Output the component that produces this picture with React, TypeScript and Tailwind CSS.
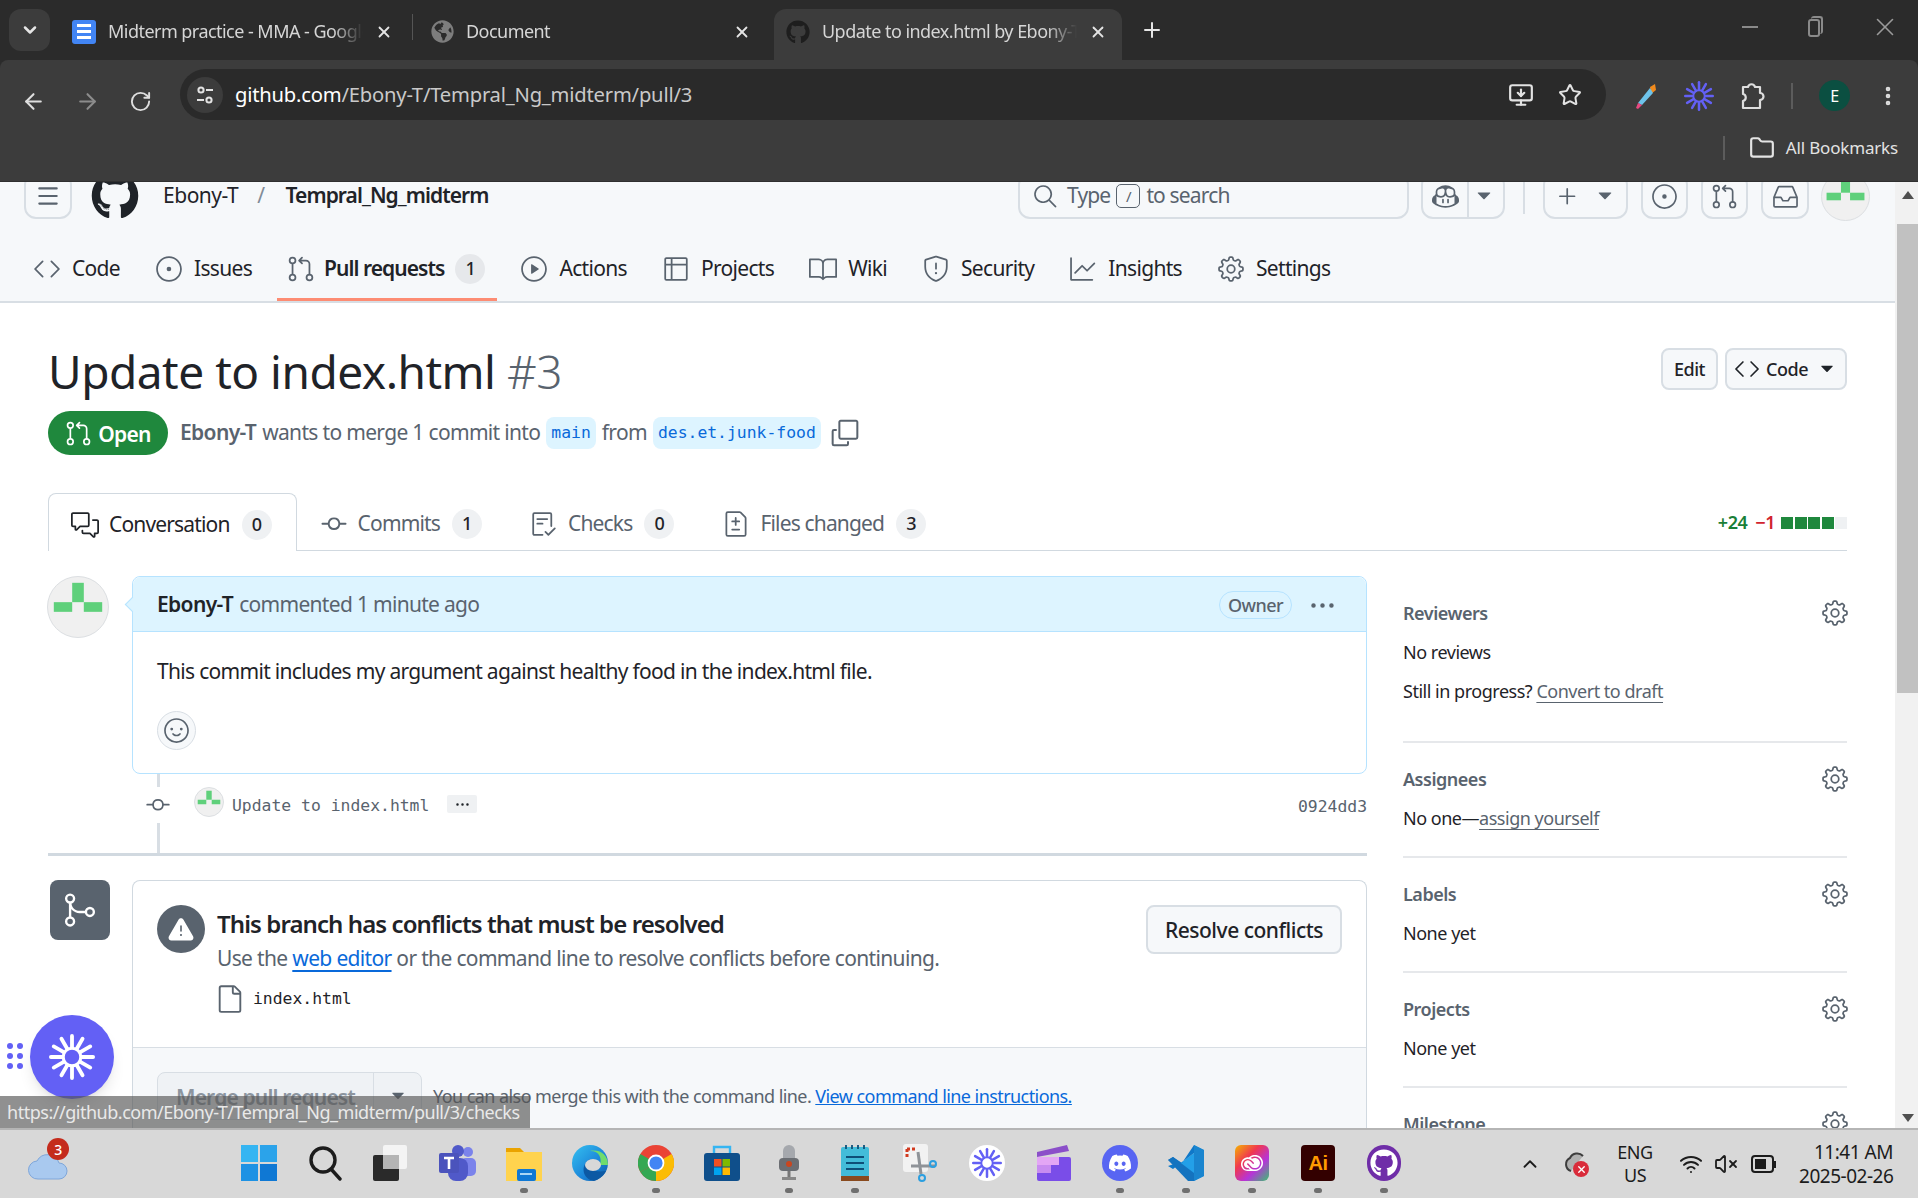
import type { ReactNode } from 'react'
import { ArrowLeft, ArrowRight, ChevronDown, ChevronUp, Folder, Menu, MonitorDown, MoreVertical, Plus, RotateCw, Star, VolumeX, Wifi, X } from 'lucide-react'
import {
  GoAlertFill, GoBook, GoChecklist, GoCode, GoCommentDiscussion, GoCopilot, GoCopy, GoFile, GoFileDiff, GoGear, GoGitCommit, GoGitMerge,
  GoGitPullRequest, GoGraph, GoInbox, GoIssueOpened, GoKebabHorizontal, GoPlay, GoPlus, GoSearch, GoShield, GoSmiley, GoTable, GoTriangleDown,
} from 'react-icons/go'
import { FaDiscord, FaGithub, FaGlobeAmericas } from 'react-icons/fa'
import { SiAdobecreativecloud } from 'react-icons/si'

function Identicon({ size }: { size: number }) {
  return (
    <svg width={size} height={size} viewBox="0 0 62 62" className="shrink-0 rounded-full border border-[#dcdfe2] bg-[#f0f0f0]">
      <rect x="25" y="6" width="12" height="20" fill="#5fd07b" />
      <rect x="6" y="26" width="19" height="10" fill="#5fd07b" />
      <rect x="37" y="26" width="19" height="10" fill="#5fd07b" />
    </svg>
  )
}

function Burst({ size, color }: { size: number; color: string }) {
  const spokes = [0, 30, 60, 90, 120, 150, 180, 210, 240, 270, 300, 330]
  return (
    <svg width={size} height={size} viewBox="0 0 24 24">
      {spokes.map((a) => (
        <line key={a} x1="12" y1="7" x2="12" y2="1" stroke={color} strokeWidth="2" strokeLinecap="round" transform={`rotate(${a} 12 12)`} />
      ))}
      <circle cx="12" cy="12" r="4.6" fill="none" stroke={color} strokeWidth="1.6" />
    </svg>
  )
}

function BrowserTab({ icon, title, active, width, inset }: { icon: ReactNode; title: string; active?: boolean; width: string; inset: string }) {
  return (
    <div className={`${width} ${inset} flex h-[51px] shrink-0 items-center gap-3 rounded-t-xl pb-[6px] ${active ? 'bg-[#3c3c3c]' : ''}`}>
      {icon}
      <span className="min-w-0 flex-1 overflow-hidden whitespace-nowrap text-[18px] tracking-[-0.03em] text-[#d6d6d6] [mask-image:linear-gradient(to_right,black_88%,transparent)]">{title}</span>
      <X size={18} strokeWidth={2.4} className="shrink-0 text-[#e4e4e4]" />
    </div>
  )
}

function TabStrip() {
  return (
    <div className="flex h-[60px] shrink-0 items-end bg-[#2b2b2b] pl-[9px]">
      <div className="mb-[9px] mr-[10px] flex h-[42px] w-[41px] items-center justify-center rounded-xl bg-[#3c3c3c]">
        <ChevronDown size={20} strokeWidth={3} className="text-[#e6e6e6]" />
      </div>
      <BrowserTab
        width="w-[352px]"
        inset="pl-[12px] pr-[19px]"
        title="Midterm practice - MMA - Google Docs"
        icon={
          <span className="flex h-[24px] w-[24px] shrink-0 flex-col justify-center gap-[3px] rounded-[3px] bg-[#4285f4] px-[5px]">
            <span className="h-[3px] bg-white" />
            <span className="h-[3px] bg-white" />
            <span className="h-[3px] bg-white" />
          </span>
        }
      />
      <div className="mb-[20px] h-[26px] w-px bg-[#555]" />
      <BrowserTab width="w-[361px]" inset="pl-[18px] pr-[23px]" title="Document" icon={<FaGlobeAmericas size={23} className="shrink-0 text-[#7d7d7d]" />} />
      <BrowserTab width="w-[348px]" inset="pl-[12px] pr-[15px]" active title="Update to index.html by Ebony-T" icon={<FaGithub size={24} className="shrink-0 text-[#1e1e1e]" />} />
      <Plus size={24} strokeWidth={2} className="mb-[18px] ml-[18px] text-[#e6e6e6]" />
      <div className="mb-[18px] ml-auto flex items-center gap-[45px] pr-[18px] text-[#9a9a9a]">
        <span className="h-[2px] w-[16px] bg-[#8a8a8a]" />
        <span className="relative h-[22px] w-[22px]">
          <span className="absolute left-[5px] top-[3px] h-[18px] w-[12px] rounded-[3px] border-2 border-[#8a8a8a]" />
          <span className="absolute left-[8px] top-0 h-[18px] w-[12px] rounded-[3px] border-r-2 border-t-2 border-[#8a8a8a]" />
        </span>
        <X size={30} strokeWidth={1.3} />
      </div>
    </div>
  )
}

function Toolbar() {
  return (
    <div className="h-[122px] shrink-0 rounded-t-lg border-b border-[#2f2f2f] bg-[#3c3c3c]">
      <div className="flex h-[60px] items-end">
        <div className="flex w-[180px] items-center pb-[6px] pl-[21px] text-[#dedede]">
          <ArrowLeft size={25} strokeWidth={2} />
          <ArrowRight size={25} strokeWidth={2} className="ml-[29px] text-[#8c8c8c]" />
          <RotateCw size={23} strokeWidth={2} className="ml-[29px]" />
        </div>
        <div className="flex h-[51px] w-[1426px] items-center rounded-full bg-[#2a2a2a] pl-[7px] pr-[24px]">
          <span className="flex h-[36px] w-[36px] items-center justify-center rounded-full bg-[#3c3c3c]">
            <svg width="20" height="20" viewBox="0 0 20 20" fill="none" stroke="#e3e3e3" strokeWidth="2">
              <circle cx="6" cy="5" r="2.6" />
              <line x1="11" y1="5" x2="18" y2="5" />
              <circle cx="14" cy="15" r="2.6" />
              <line x1="2" y1="15" x2="9" y2="15" />
            </svg>
          </span>
          <span className="ml-[12px] text-[20.2px] tracking-[-0.01em] text-[#c9c9c9]">
            <span className="text-white">github.com</span>/Ebony-T/Tempral_Ng_midterm/pull/3
          </span>
          <MonitorDown size={26} strokeWidth={2} className="ml-auto text-[#e3e3e3]" />
          <Star size={24} strokeWidth={2} className="ml-[24px] text-[#e3e3e3]" />
        </div>
        <div className="flex items-center pb-[9px] pl-[28px] text-[#dedede]">
          <svg width="24" height="30" viewBox="0 0 24 30">
            <path d="M16 6 L21 3 L22 9 L17 13 Z" fill="#f08a1d" />
            <path d="M16 7 L19 12 L8 24 L4 22 Z" fill="#6ec3ea" />
            <path d="M4 22 L8 24 L4 28 L2 27 Z" fill="#e64980" />
          </svg>
          <span className="ml-[26px]">
            <Burst size={30} color="#6360f5" />
          </span>
          <svg width="26" height="30" viewBox="0 0 26 30" fill="none" stroke="#dedede" strokeWidth="2.2" strokeLinejoin="round" className="ml-[25px]">
            <path d="M4 6 H9 A3.6 3.6 0 0 1 16 6 H21 V12 A3.4 3.4 0 0 1 21 19 V27 H4 V20 A3.6 3.6 0 0 0 4 13 Z" />
          </svg>
          <span className="ml-[26px] h-[26px] w-[2px] bg-[#5c5c5c]" />
          <span className="ml-[26px] flex h-[31px] w-[31px] items-center justify-center rounded-full bg-[#0b4f41] text-[16px] text-white">E</span>
          <MoreVertical size={24} strokeWidth={2.6} className="ml-[26px]" />
        </div>
      </div>
      <div className="flex h-[61px] items-center justify-end pb-[6px] pr-[20px]">
        <span className="h-[24px] w-[2px] bg-[#5c5c5c]" />
        <Folder size={26} strokeWidth={2} className="ml-[24px] text-[#e3e3e3]" />
        <span className="ml-[11px] text-[17px] tracking-[-0.01em] text-[#e3e3e3]">All Bookmarks</span>
      </div>
    </div>
  )
}

function HeaderButton({ children, width }: { children: ReactNode; width: string }) {
  return <div className={`${width} flex h-[46px] shrink-0 items-center justify-center rounded-xl border-2 border-[#d8dee4] text-[#59636e]`}>{children}</div>
}

function NavItem({ icon, label, active, count }: { icon: ReactNode; label: string; active?: boolean; count?: string }) {
  return (
    <div className={`relative flex h-[63px] items-center px-3 pb-[2px] ${active ? 'gap-[11px]' : 'gap-[13px]'}`}>
      <span className="text-[#59636e]">{icon}</span>
      <span className={`text-[21px] text-[#1f2328] ${active ? 'font-semibold tracking-[-0.045em]' : 'tracking-[-0.0325em]'}`}>{label}</span>
      {count && <span className="flex h-[30px] w-[30px] items-center justify-center rounded-full bg-[#e6e8eb] text-[18px] font-medium text-[#1f2328]">{count}</span>}
      {active && <span className="absolute inset-x-0 bottom-0 h-[3px] bg-[#fd8c73]" />}
    </div>
  )
}

function RepoHeader() {
  return (
    <header className="-mt-[14px] border-b-2 border-[#d8dee4] bg-[#f6f8fa]">
      <div className="flex h-[56px] items-center pl-[24px] pr-[25px]">
        <HeaderButton width="w-[48px]">
          <Menu size={26} strokeWidth={2} />
        </HeaderButton>
        <FaGithub size={48} className="ml-[19px] text-[#1f2328]" />
        <span className="ml-[24px] text-[21px] text-[#1f2328]">Ebony-T</span>
        <span className="ml-[19px] text-[21px] text-[#818b98]">/</span>
        <span className="ml-[21px] text-[21px] font-semibold tracking-[-0.045em] text-[#1f2328]">Tempral_Ng_midterm</span>
        <div className="ml-auto flex h-[46px] w-[391px] items-center rounded-xl border-2 border-[#d8dee4] pl-[12px] text-[21px] tracking-[-0.04em] text-[#59636e]">
          <GoSearch size={26} />
          <span className="ml-[9px]">Type</span>
          <span className="mx-[6px] flex h-[24px] w-[24px] items-center justify-center rounded-[5px] border border-[#59636e] text-[15px]">/</span>
          <span>to search</span>
        </div>
        <div className="ml-[12px] flex h-[46px] w-[84px] items-center rounded-xl border-2 border-[#d8dee4] text-[#59636e]">
          <span className="flex h-full w-[46px] items-center justify-center border-r-2 border-[#d8dee4]">
            <GoCopilot size={27} />
          </span>
          <GoTriangleDown size={24} className="ml-[3px]" />
        </div>
        <span className="ml-[18px] h-[36px] w-[2px] bg-[#d8dee4]" />
        <div className="ml-[18px] flex h-[46px] w-[85px] items-center justify-center gap-[12px] rounded-xl border-2 border-[#d8dee4] text-[#59636e]">
          <GoPlus size={27} />
          <GoTriangleDown size={24} />
        </div>
        <span className="ml-[13px]">
          <HeaderButton width="w-[47px]">
            <GoIssueOpened size={27} />
          </HeaderButton>
        </span>
        <span className="ml-[13px]">
          <HeaderButton width="w-[47px]">
            <GoGitPullRequest size={27} />
          </HeaderButton>
        </span>
        <span className="ml-[13px]">
          <HeaderButton width="w-[48px]">
            <GoInbox size={27} />
          </HeaderButton>
        </span>
        <span className="ml-[12px]">
          <Identicon size={49} />
        </span>
      </div>
      <nav className="flex h-[77px] items-end gap-[13px] pl-[23px] pr-[24px]">
        <NavItem icon={<GoCode size={28} className="-m-[2px] block" />} label="Code" />
        <NavItem icon={<GoIssueOpened size={28} className="-m-[2px] block" />} label="Issues" />
        <NavItem icon={<GoGitPullRequest size={28} className="-m-[2px] block" />} label="Pull requests" active count="1" />
        <NavItem icon={<GoPlay size={28} className="-m-[2px] block" />} label="Actions" />
        <NavItem icon={<GoTable size={28} className="-m-[2px] block" />} label="Projects" />
        <NavItem icon={<GoBook size={28} className="-m-[2px] block" />} label="Wiki" />
        <NavItem icon={<GoShield size={28} className="-m-[2px] block" />} label="Security" />
        <NavItem icon={<GoGraph size={28} className="-m-[2px] block" />} label="Insights" />
        <NavItem icon={<GoGear size={28} className="-m-[2px] block" />} label="Settings" />
      </nav>
    </header>
  )
}

function BranchChip({ name }: { name: string }) {
  return <span className="flex h-[32px] items-center rounded-lg bg-[#ddf4ff] px-[5px] font-['DejaVu_Sans_Mono',monospace] text-[16.4px] tracking-normal text-[#0969da]">{name}</span>
}

function PrTab({ icon, label, count, active }: { icon: ReactNode; label: string; count: string; active?: boolean }) {
  return (
    <div className={`flex items-center gap-3 pt-[4px] ${active ? '-mb-px h-[58px] rounded-t-lg border-x border-t border-[#d1d9e0] bg-white px-[24px]' : 'h-[57px] pl-[25px] pr-[25px]'}`}>
      <span className={active ? 'text-[#1f2328]' : 'text-[#59636e]'}>{icon}</span>
      <span className={`text-[21px] tracking-[-0.04em] ${active ? 'text-[#1f2328]' : 'text-[#59636e]'}`}>{label}</span>
      <span className="flex h-[30px] w-[30px] items-center justify-center rounded-full bg-[#eff1f3] text-[18px] font-medium text-[#1f2328]">{count}</span>
    </div>
  )
}

function PrHeading() {
  return (
    <>
      <div className="flex items-start justify-between pt-[32px]">
        <h1 className="text-[46px] leading-[72px] text-[#1f2328]">
          Update to index.html <span className="font-light text-[#59636e]">#3</span>
        </h1>
        <div className="mt-[13px] flex gap-[7px]">
          <div className="flex h-[42px] w-[57px] items-center justify-center rounded-lg border-2 border-[#d8dee4] bg-[#f6f8fa] text-[18px] font-medium text-[#1f2328]">Edit</div>
          <div className="flex h-[42px] w-[122px] items-center justify-center gap-[6px] rounded-lg border-2 border-[#d8dee4] bg-[#f6f8fa] text-[18px] font-medium text-[#1f2328]">
            <GoCode size={26} className="text-[#1f2328]" />
            Code
            <GoTriangleDown size={22} className="ml-[2px]" />
          </div>
        </div>
      </div>
      <div className="mt-[4px] flex h-[44px] items-center text-[21px] tracking-[-0.032em] text-[#59636e]">
        <span className="flex h-[44px] w-[120px] items-center justify-center gap-[6px] rounded-full bg-[#1f883d] font-semibold text-white">
          <GoGitPullRequest size={27} />
          <span className="pt-[3px]">Open</span>
        </span>
        <span className="ml-[12px] font-semibold tracking-[-0.03em]">Ebony-T</span>
        <span className="ml-[6px]">wants to merge 1 commit into</span>
        <span className="ml-[6px]">
          <BranchChip name="main" />
        </span>
        <span className="mx-[6px]">from</span>
        <BranchChip name="des.et.junk-food" />
        <GoCopy size={32} className="-my-[4px] ml-[8px]" />
      </div>
      <div className="mt-[38px] flex h-[58px] items-end border-b border-[#d1d9e0]">
        <PrTab active icon={<GoCommentDiscussion size={28} className="-m-[2px] block" />} label="Conversation" count="0" />
        <PrTab icon={<GoGitCommit size={30} className="-m-[3px] block" />} label="Commits" count="1" />
        <PrTab icon={<GoChecklist size={28} className="-m-[2px] block" />} label="Checks" count="0" />
        <PrTab icon={<GoFileDiff size={28} className="-m-[2px] block" />} label="Files changed" count="3" />
        <div className="mb-[14px] ml-auto flex items-center text-[18px] font-semibold">
          <span className="text-[#1a7f37]">+24</span>
          <span className="ml-[8px] text-[#d1242f]">−1</span>
          <span className="ml-[6px] flex gap-[1.5px]">
            <span className="h-[12px] w-[12px] bg-[#1f883d]" />
            <span className="h-[12px] w-[12px] bg-[#1f883d]" />
            <span className="h-[12px] w-[12px] bg-[#1f883d]" />
            <span className="h-[12px] w-[12px] bg-[#1f883d]" />
            <span className="h-[12px] w-[12px] bg-[#eff1f3]" />
          </span>
        </div>
      </div>
    </>
  )
}

function CommentBox() {
  return (
    <div className="flex">
      <span className="-ml-px">
        <Identicon size={62} />
      </span>
      <div className="relative ml-[23px] h-[198px] flex-1 rounded-lg border border-[#b6e3ff]">
        <span className="absolute -left-[6px] top-[22px] h-[11px] w-[11px] rotate-45 border-b border-l border-[#b6e3ff] bg-[#ddf4ff]" />
        <div className="flex h-[55px] items-center rounded-t-lg border-b border-[#b6e3ff] bg-[#ddf4ff] pl-[24px] pr-[30px] pt-[2px] text-[21px] tracking-[-0.033em]">
          <span className="relative font-semibold tracking-[-0.03em] text-[#1f2328]">Ebony-T</span>
          <span className="ml-[6px] text-[#59636e]">commented 1 minute ago</span>
          <span className="ml-auto flex h-[28px] w-[73px] items-center justify-center rounded-full border border-[#b6e3ff] text-[18px] font-medium tracking-[-0.03em] text-[#59636e]">Owner</span>
          <GoKebabHorizontal size={27} className="ml-[17px] text-[#59636e]" />
        </div>
        <p className="ml-[24px] mt-[24px] text-[21px] leading-[30px] tracking-[-0.033em] text-[#1f2328]">This commit includes my argument against healthy food in the index.html file.</p>
        <span className="ml-[24px] mt-[25px] flex h-[39px] w-[39px] items-center justify-center rounded-full border border-[#d8dee4] bg-[#f6f8fa] text-[#59636e]">
          <GoSmiley size={27} />
        </span>
      </div>
    </div>
  )
}

function CommitRow() {
  return (
    <div className="relative flex h-[79px] items-start pl-[96px] pt-[13px]">
      <span className="absolute left-[109px] top-0 h-full w-[3px] bg-[#d8dee4]" />
      <span className="relative mt-[0px] flex bg-white py-[4px] text-[#59636e]">
        <GoGitCommit size={28} />
      </span>
      <span className="ml-[22px]">
        <Identicon size={30} />
      </span>
      <span className="ml-[8px] mt-[7px] font-['DejaVu_Sans_Mono',monospace] text-[16.4px] tracking-normal text-[#59636e]">Update to index.html</span>
      <span className="ml-[18px] mt-[8px] flex h-[18px] w-[30px] items-center justify-center rounded-[2px] bg-[#eff1f3] text-[#1f2328]">
        <GoKebabHorizontal size={15} />
      </span>
      <span className="ml-auto mt-[8px] font-['DejaVu_Sans_Mono',monospace] text-[16.4px] tracking-normal text-[#59636e]">0924dd3</span>
    </div>
  )
}

function MergeBox() {
  return (
    <div className="mt-[24px] flex">
      <span className="ml-[2px] flex h-[60px] w-[60px] shrink-0 items-center justify-center rounded-lg bg-[#59636e] text-white">
        <GoGitMerge size={38} />
      </span>
      <div className="ml-[22px] flex-1 rounded-t-lg border-x border-t border-[#d1d9e0]">
        <div className="flex h-[167px] items-start border-b border-[#d8dee4] pl-[24px] pr-[24px] pt-[24px]">
          <span className="flex h-[48px] w-[48px] shrink-0 items-center justify-center rounded-full bg-[#59636e] text-white">
            <GoAlertFill size={26} />
          </span>
          <div className="-mt-[2px] ml-[12px] flex-1">
            <div className="text-[24px] font-semibold leading-[42px] tracking-[-0.038em] text-[#1f2328]">This branch has conflicts that must be resolved</div>
            <div className="text-[21px] leading-[26px] tracking-[-0.0315em] text-[#59636e]">
              Use the <span className="text-[#0969da] underline underline-offset-4">web editor</span> or the command line to resolve conflicts before continuing.
            </div>
            <div className="mt-[13px] flex items-center">
              <GoFile size={30} className="-ml-[2px] text-[#59636e]" />
              <span className="ml-[8px] font-['DejaVu_Sans_Mono',monospace] text-[16.4px] tracking-normal text-[#1f2328]">index.html</span>
            </div>
          </div>
          <div className="flex h-[49px] w-[196px] shrink-0 items-center justify-center rounded-lg border-2 border-[#d8dee4] bg-[#f6f8fa] pt-[2px] text-[21px] font-medium text-[#1f2328]">Resolve conflicts</div>
        </div>
        <div className="flex h-[120px] items-start bg-[#f6f8fa] pl-[24px] pt-[24px]">
          <div className="flex h-[48px] w-[265px] items-center rounded-lg border border-[#d8dee4] bg-[#eff2f5] text-[21px] font-semibold text-[#8c959f]">
            <span className="flex-1 pl-[18px] pt-[3px] tracking-[-0.04em]">Merge pull request</span>
            <span className="flex h-full w-[48px] items-center justify-center border-l border-[#d8dee4] text-[#59636e]">
              <GoTriangleDown size={22} />
            </span>
          </div>
          <span className="ml-[11px] mt-[11px] text-[18px] tracking-[-0.0315em] text-[#59636e]">
            You can also merge this with the command line. <span className="text-[#0969da] underline">View command line instructions.</span>
          </span>
        </div>
      </div>
    </div>
  )
}

function SidebarSection({ title, children }: { title: string; children: ReactNode }) {
  return (
    <section className="border-b-2 border-[#e6e8eb] pb-[26px] pt-[24px]">
      <div className="flex h-[24px] items-center justify-between">
        <span className="text-[18px] font-semibold text-[#59636e]">{title}</span>
        <GoGear size={28} className="-m-[2px] text-[#59636e]" />
      </div>
      <div className="mt-[15px] flex flex-col gap-[15px] text-[18px] leading-[24px] text-[#1f2328]">{children}</div>
    </section>
  )
}

function Sidebar() {
  return (
    <aside className="mt-px w-[444px] shrink-0">
      <SidebarSection title="Reviewers">
        <div>No reviews</div>
        <div className="pb-[12px]">
          Still in progress? <span className="text-[#59636e] underline underline-offset-4">Convert to draft</span>
        </div>
      </SidebarSection>
      <SidebarSection title="Assignees">
        <div>
          No one—<span className="text-[#59636e] underline underline-offset-4">assign yourself</span>
        </div>
      </SidebarSection>
      <SidebarSection title="Labels">
        <div>None yet</div>
      </SidebarSection>
      <SidebarSection title="Projects">
        <div>None yet</div>
      </SidebarSection>
      <SidebarSection title="Milestone">
        <div>No milestone</div>
      </SidebarSection>
    </aside>
  )
}

function Scrollbar() {
  return (
    <div className="flex w-[23px] shrink-0 flex-col bg-[#f1f1f1]">
      <div className="flex h-[42px] justify-center pl-[2px] pt-[9px]">
        <span className="h-0 w-0 border-x-[6px] border-b-[8px] border-x-transparent border-b-[#505050]" />
      </div>
      <div className="ml-[2px] h-[469px] bg-[#c1c1c1]" />
      <div className="mt-auto flex h-[21px] items-center justify-center pl-[2px]">
        <span className="h-0 w-0 border-x-[6px] border-t-[8px] border-x-transparent border-t-[#505050]" />
      </div>
    </div>
  )
}

function TaskIcon({ children, running }: { children: ReactNode; running?: boolean }) {
  return (
    <div className="relative flex h-full w-[66.2px] shrink-0 items-center justify-center pb-[3px]">
      {children}
      {running && <span className="absolute bottom-[5px] h-[5px] w-[8px] rounded-full bg-[#6f6f6f]" />}
    </div>
  )
}

function Taskbar() {
  return (
    <div className="flex h-[70px] shrink-0 items-stretch border-t-2 border-[#b5b5b5] bg-[#d8d8d8]">
      <div className="relative w-[226px] shrink-0">
        <svg width="40" height="34" viewBox="0 0 40 34" className="absolute left-[28px] top-[17px]">
          <path d="M10 32 a9 9 0 0 1 -1 -18 a12 12 0 0 1 22 2 a8 8 0 0 1 0 16 Z" fill="#a9c9ef" stroke="#7ea6da" />
        </svg>
        <span className="absolute left-[47px] top-[8px] flex h-[22px] w-[22px] items-center justify-center rounded-full bg-[#c42b1c] text-[14px] font-medium text-white">3</span>
      </div>

      <TaskIcon>
        <svg width="36" height="36" viewBox="0 0 36 36">
          <rect x="0" y="0" width="17" height="17" fill="#35b5f2" />
          <rect x="19" y="0" width="17" height="17" fill="#2ba3ea" />
          <rect x="0" y="19" width="17" height="17" fill="#1e92e4" />
          <rect x="19" y="19" width="17" height="17" fill="#0f78d4" />
        </svg>
      </TaskIcon>
      <TaskIcon>
        <svg width="34" height="36" viewBox="0 0 34 36" fill="none" stroke="#1c1c1c" strokeWidth="3.4">
          <circle cx="15" cy="15" r="12" />
          <line x1="23" y1="24" x2="32" y2="34" strokeLinecap="round" />
        </svg>
      </TaskIcon>
      <TaskIcon>
        <svg width="36" height="36" viewBox="0 0 36 36">
          <rect x="10" y="0" width="24" height="24" rx="2" fill="#f4f4f4" />
          <rect x="0" y="10" width="26" height="26" rx="2" fill="#2a2a2a" />
          <rect x="10" y="10" width="16" height="14" fill="#b5b5b5" />
        </svg>
      </TaskIcon>
      <TaskIcon>
        <svg width="38" height="36" viewBox="0 0 38 36">
          <circle cx="29" cy="7" r="5" fill="#7b83eb" />
          <rect x="22" y="13" width="15" height="18" rx="5" fill="#7b83eb" />
          <circle cx="19" cy="6" r="6" fill="#5059c9" />
          <rect x="9" y="13" width="20" height="23" rx="8" fill="#5059c9" />
          <rect x="0" y="8" width="20" height="20" rx="2" fill="#4b53bc" />
          <path d="M5 13 H15 M10 13 V24" stroke="#fff" strokeWidth="2.6" />
        </svg>
      </TaskIcon>
      <TaskIcon running>
        <svg width="36" height="36" viewBox="0 0 36 36">
          <path d="M0 3 H14 L18 7 H36 V34 H0 Z" fill="#eaa300" />
          <rect x="0" y="7" width="36" height="29" fill="#ffd34e" />
          <rect x="11" y="24" width="19" height="12" rx="2" fill="#0f78d4" />
          <rect x="14" y="28" width="12" height="2" fill="#a9d6f5" />
        </svg>
      </TaskIcon>
      <TaskIcon>
        <svg width="36" height="36" viewBox="0 0 36 36">
          <defs>
            <linearGradient id="edgeFill" x1="0" y1="0" x2="1" y2="1">
              <stop offset="0" stopColor="#35c1f1" />
              <stop offset="0.6" stopColor="#1b84d8" />
              <stop offset="1" stopColor="#0c59a4" />
            </linearGradient>
          </defs>
          <circle cx="18" cy="18" r="18" fill="url(#edgeFill)" />
          <path d="M36 20 C36 8 26 4 18 6 C28 6 30 14 28 20 Z" fill="#6fdc6c" />
          <path d="M22 36 C10 34 8 20 18 14 C14 22 20 28 34 26 C32 30 28 34 22 36 Z" fill="#0c59a4" />
          <ellipse cx="21" cy="20" rx="8" ry="6" fill="#d8d8d8" />
        </svg>
      </TaskIcon>
      <TaskIcon running>
        <svg width="36" height="36" viewBox="0 0 36 36">
          <circle cx="18" cy="18" r="18" fill="#ea4335" />
          <path d="M18 18 L2.4 27 A18 18 0 0 0 18 36 Z" fill="#34a853" />
          <path d="M18 18 L2.4 27 A18 18 0 0 1 2.4 9 Z" fill="#34a853" />
          <path d="M18 18 L33.6 9 A18 18 0 0 1 18 36 Z" fill="#fbbc04" />
          <circle cx="18" cy="18" r="8.4" fill="#fff" />
          <circle cx="18" cy="18" r="6.6" fill="#4285f4" />
        </svg>
      </TaskIcon>
      <TaskIcon>
        <svg width="36" height="36" viewBox="0 0 36 36">
          <rect x="0" y="8" width="36" height="28" rx="3" fill="#0f4f8b" />
          <path d="M10 8 V2 H26 V8" fill="none" stroke="#35b5f2" strokeWidth="2.4" />
          <rect x="10" y="14" width="7.5" height="7.5" fill="#f25022" />
          <rect x="18.5" y="14" width="7.5" height="7.5" fill="#7fba00" />
          <rect x="10" y="22.5" width="7.5" height="7.5" fill="#00a4ef" />
          <rect x="18.5" y="22.5" width="7.5" height="7.5" fill="#ffb900" />
        </svg>
      </TaskIcon>
      <TaskIcon running>
        <svg width="22" height="36" viewBox="0 0 22 36">
          <rect x="5" y="0" width="12" height="22" rx="6" fill="#a5a8ad" />
          <rect x="1" y="13" width="20" height="13" rx="4" fill="#6b6e73" />
          <circle cx="11" cy="19" r="3" fill="#c8461f" />
          <rect x="9.5" y="26" width="3" height="6" fill="#777" />
          <rect x="4" y="32" width="14" height="3" fill="#888" />
        </svg>
      </TaskIcon>
      <TaskIcon running>
        <svg width="30" height="36" viewBox="0 0 30 36">
          <rect x="1" y="2" width="28" height="30" rx="2" fill="#43bcd9" />
          <rect x="1" y="31" width="28" height="5" fill="#8a4b1f" />
          <path d="M6 12 H24 M6 18 H24 M6 24 H24" stroke="#0e4f78" strokeWidth="2.2" />
          <path d="M6 0 V4 M12 0 V4 M18 0 V4 M24 0 V4" stroke="#0e4f78" strokeWidth="1.8" />
        </svg>
      </TaskIcon>
      <TaskIcon>
        <svg width="36" height="38" viewBox="0 0 36 38">
          <rect x="0" y="0" width="25" height="28" rx="3" fill="#f2f2f2" />
          <path d="M4 5 H12 M4 5 V15" stroke="#d13a1f" strokeWidth="3" strokeDasharray="3 2" fill="none" />
          <path d="M15 8 L18 30" stroke="#8f9398" strokeWidth="3" />
          <path d="M8 22 H32" stroke="#8f9398" strokeWidth="3" />
          <circle cx="30" cy="20" r="3" fill="none" stroke="#2b9fe0" strokeWidth="2" />
          <circle cx="19" cy="34" r="3" fill="none" stroke="#2b9fe0" strokeWidth="2" />
        </svg>
      </TaskIcon>
      <TaskIcon>
        <span className="flex h-[36px] w-[36px] items-center justify-center rounded-full bg-white">
          <Burst size={30} color="#6360f5" />
        </span>
      </TaskIcon>
      <TaskIcon>
        <svg width="36" height="36" viewBox="0 0 36 36">
          <path d="M2 7 L32 0 L34 6 L2 12 Z" fill="#8b4fc9" />
          <rect x="2" y="12" width="34" height="24" rx="2" fill="#7a4de8" />
          <rect x="2" y="12" width="22" height="8" fill="#e3a6f5" />
          <rect x="2" y="20" width="14" height="8" fill="#c88cf0" />
        </svg>
      </TaskIcon>
      <TaskIcon running>
        <span className="flex h-[36px] w-[36px] items-center justify-center rounded-full bg-[#5865f2] text-white">
          <FaDiscord size={24} />
        </span>
      </TaskIcon>
      <TaskIcon running>
        <svg width="36" height="36" viewBox="0 0 36 36">
          <path d="M26 0 L36 5 V31 L26 36 L10 20 L26 8 Z" fill="#23a0e8" />
          <path d="M26 0 V36 L36 31 V5 Z" fill="#1a85cf" />
          <path d="M26 8 L5 24 L0 21 L9 18 L0 15 L5 12 L14 18 L26 0 Z" fill="#0f78c9" />
          <path d="M26 28 L5 12 L0 15 L20 36 L26 36 Z" fill="#1473bf" />
        </svg>
      </TaskIcon>
      <TaskIcon running>
        <span className="flex h-[36px] w-[34px] items-center justify-center rounded-[6px] bg-[linear-gradient(135deg,#f5b400_0%,#f0384f_35%,#b634d8_65%,#39c26f_100%)] text-white">
          <SiAdobecreativecloud size={22} />
        </span>
      </TaskIcon>
      <TaskIcon running>
        <span className="flex h-[36px] w-[34px] items-center justify-center rounded-[4px] bg-[#330000] font-['Liberation_Sans'] text-[20px] font-semibold text-[#ff9a00]">Ai</span>
      </TaskIcon>
      <TaskIcon running>
        <span className="flex h-[36px] w-[34px] items-center justify-center rounded-full bg-[#6f2da8] text-white">
          <FaGithub size={28} />
        </span>
      </TaskIcon>

      <div className="ml-auto flex items-center pr-[25px] text-[#1c1c1c]">
        <ChevronUp size={22} strokeWidth={2} />
        <span className="relative ml-[22px] h-[26px] w-[26px]">
          <svg width="26" height="22" viewBox="0 0 26 22" className="absolute left-0 top-0" fill="none" stroke="#3d3d3d" strokeWidth="2">
            <path d="M8 20 a7 7 0 0 1 -1 -13 a8 8 0 0 1 13 -2" fill="#b0b0b0" />
          </svg>
          <span className="absolute bottom-0 right-0 flex h-[16px] w-[16px] items-center justify-center rounded-full bg-[#d92b3a]">
            <X size={11} strokeWidth={3} className="text-white" />
          </span>
        </span>
        <div className="ml-[20px] w-[52px] text-center text-[18px] leading-[23px]">
          <div>ENG</div>
          <div>US</div>
        </div>
        <Wifi size={24} strokeWidth={2} className="ml-[18px]" />
        <VolumeX size={24} strokeWidth={1.8} className="ml-[11px]" />
        <span className="relative ml-[13px] flex h-[18px] w-[23px] items-center rounded-[4px] border-2 border-[#1c1c1c] p-[2px]">
          <span className="h-full w-[11px] bg-[#1c1c1c]" />
          <span className="absolute -right-[4px] h-[7px] w-[2px] bg-[#1c1c1c]" />
        </span>
        <div className="ml-[25px] w-[94px] whitespace-nowrap text-right text-[19px] leading-[24px]">
          <div>11:41 AM</div>
          <div>2025-02-26</div>
        </div>
      </div>
    </div>
  )
}

export default function App() {
  return (
    <div className="flex h-[1198px] w-[1918px] flex-col overflow-hidden bg-[#2b2b2b] font-['Noto_Sans',sans-serif] tracking-[-0.03em]">
      <TabStrip />
      <Toolbar />
      <div className="relative flex min-h-0 flex-1 bg-white">
        <div className="min-w-0 flex-1 overflow-hidden">
          <RepoHeader />
          <main className="px-[48px]">
            <PrHeading />
            <div className="flex justify-between pt-[25px]">
              <div className="w-[1319px] shrink-0">
                <CommentBox />
                <CommitRow />
                <div className="h-[3px] bg-[#d1d9e0]" />
                <MergeBox />
              </div>
              <Sidebar />
            </div>
          </main>
        </div>
        <Scrollbar />

        {/* floating widget and link preview sit over the page */}
        <div className="absolute bottom-[29px] left-[30px] flex h-[84px] w-[84px] items-center justify-center rounded-full bg-[#6360f5] shadow-lg">
          <Burst size={46} color="#fff" />
        </div>
        <div className="absolute bottom-[59px] left-[7px] grid grid-cols-2 gap-x-[4px] gap-y-[4px]">
          <span className="h-[6px] w-[6px] rounded-full bg-[#6360f5]" />
          <span className="h-[6px] w-[6px] rounded-full bg-[#6360f5]" />
          <span className="h-[6px] w-[6px] rounded-full bg-[#6360f5]" />
          <span className="h-[6px] w-[6px] rounded-full bg-[#6360f5]" />
          <span className="h-[6px] w-[6px] rounded-full bg-[#6360f5]" />
          <span className="h-[6px] w-[6px] rounded-full bg-[#6360f5]" />
        </div>
        <div className="absolute bottom-0 left-0 flex h-[32px] w-[530px] items-center bg-[#555]/65 pl-[7px] text-[18px] text-[#e9e9e9]">https://github.com/Ebony-T/Tempral_Ng_midterm/pull/3/checks</div>
      </div>
      <Taskbar />
    </div>
  )
}
